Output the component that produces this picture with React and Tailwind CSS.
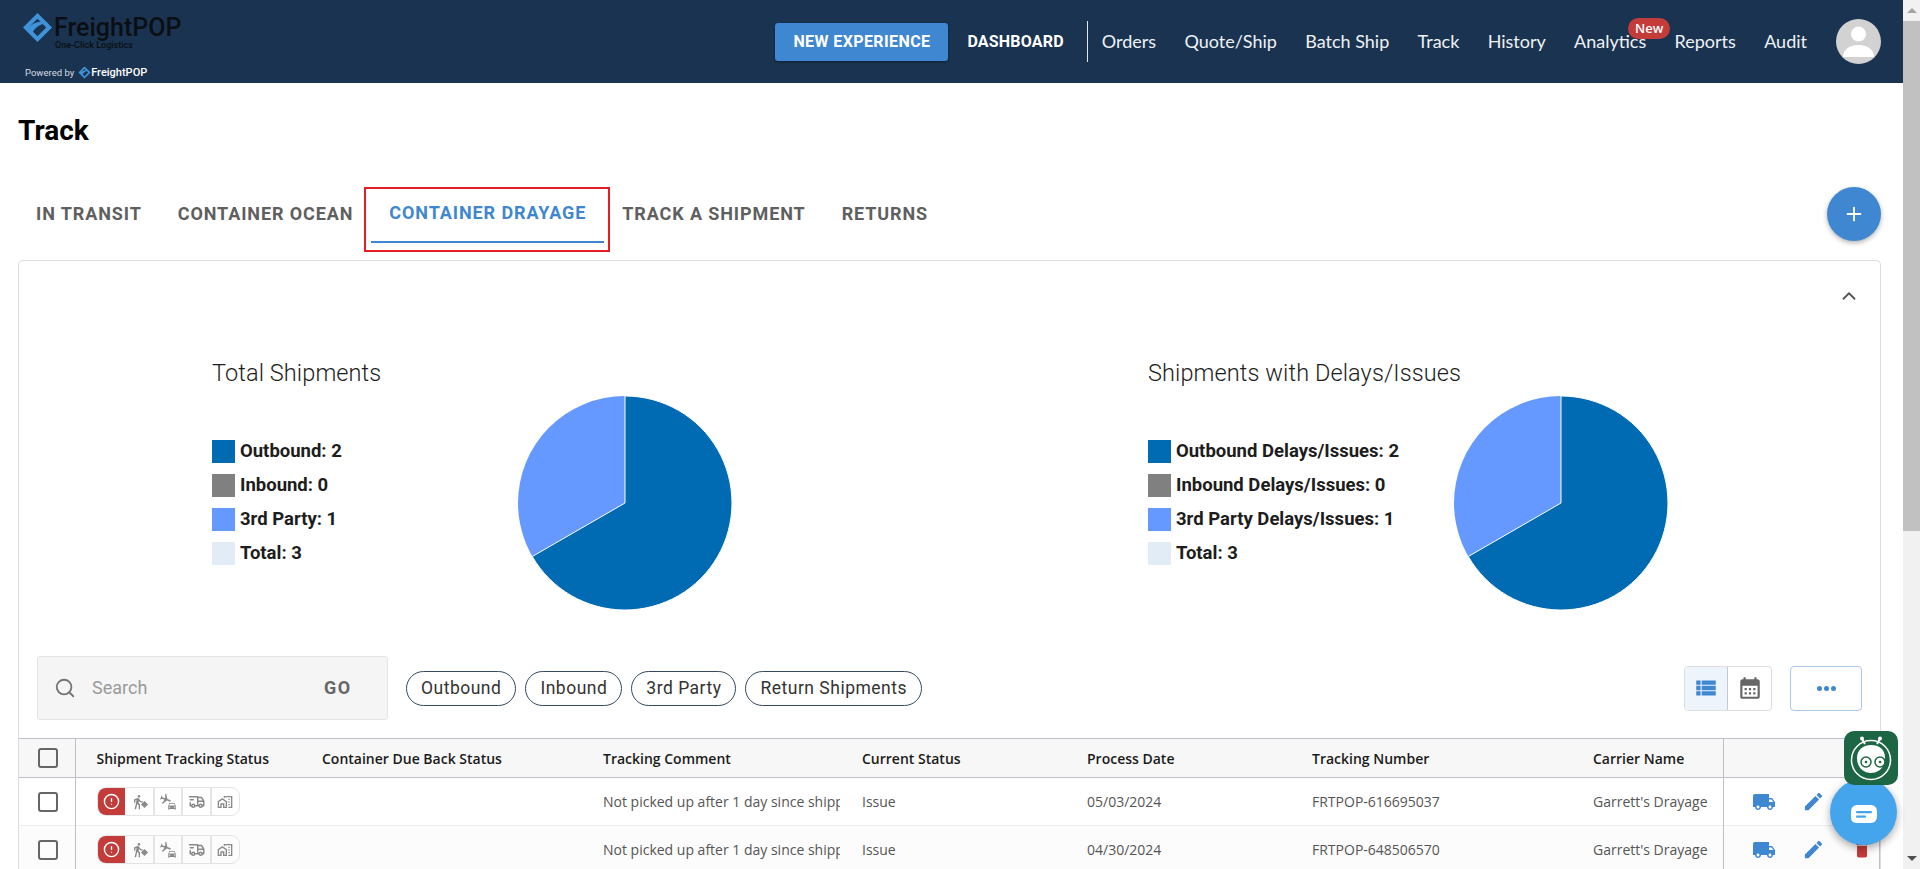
import { ChevronUp, Plus, Search, CircleAlert } from "lucide-react";
import { MdLocalShipping, MdEdit, MdDelete, MdViewList, MdCalendarMonth, MdFlight, MdDirectionsCar, MdDirectionsWalk, MdOutlineHomeWork } from "react-icons/md";
import { TbTruckDelivery } from "react-icons/tb";

const heading = "font-['Roboto',sans-serif]";

const navItems = ["Orders", "Quote/Ship", "Batch Ship", "Track", "History", "Analytics", "Reports", "Audit"];
const tabs = ["IN TRANSIT", "CONTAINER OCEAN", "CONTAINER DRAYAGE", "TRACK A SHIPMENT", "RETURNS"];
const filters = ["Outbound", "Inbound", "3rd Party", "Return Shipments"];

const rows = [
  { date: "05/03/2024", tracking: "FRTPOP-616695037", bg: "bg-white" },
  { date: "04/30/2024", tracking: "FRTPOP-648506570", bg: "bg-[#fcfcfc]" },
];

function LogoMark({ className }) {
  return (
    <svg viewBox="0 0 32 32" className={className}>
      <path d="M16 1 L31 16 L16 31 L1 16 Z M16 7 L7 16 L16 25 L25 16 Z" fill="#3f93d8" fillRule="evenodd" />
      <path d="M6 17 C12 10 20 9 27 11 C20 12 14 15 11 21 Z" fill="#3f93d8" />
    </svg>
  );
}

function Avatar() {
  return (
    <svg viewBox="0 0 45 45" className="w-[45px] h-[45px]">
      <defs>
        <clipPath id="avatar-clip">
          <circle cx="22.5" cy="22.5" r="22.5" />
        </clipPath>
      </defs>
      <circle cx="22.5" cy="22.5" r="22.5" fill="#d2d2d2" />
      <g clipPath="url(#avatar-clip)">
        <circle cx="22.5" cy="15" r="7.5" fill="#fff" />
        <path d="M7 38 C7 30 14 26 22.5 26 C31 26 38 30 38 38 Z" fill="#fff" />
      </g>
    </svg>
  );
}

function Header() {
  return (
    <header className="h-[83px] shrink-0 bg-[#1a3350] flex items-start justify-between pr-[22px]">
      <div className="pl-[22px] pt-[12px] w-[300px]">
        <div className="flex items-center">
          <LogoMark className="w-[31px] h-[31px]" />
          <span className="font-['Roboto',sans-serif] text-[25px] leading-[26px] text-[#0b0f14] font-medium ml-[1px]">FreightPOP</span>
        </div>
        <div className="font-['Roboto',sans-serif] text-[9px] leading-[10px] text-[#0b0f14] ml-[33px] mt-[-3px] font-medium">One-Click Logistics</div>
        <div className="flex items-center mt-[16px] ml-[3px] text-[9.5px] leading-[12px] text-[#d8dde3] font-['Roboto',sans-serif]">
          Powered by
          <LogoMark className="w-[13px] h-[13px] ml-[4px]" />
          <span className="text-white text-[11px] font-medium">FreightPOP</span>
        </div>
      </div>
      <nav className="flex items-center h-full">
        <button className={`${heading} h-[38px] w-[173px] rounded-[3px] bg-[#3f87d0] text-white text-[16px] font-bold tracking-[0.4px] shadow-[0_1px_3px_rgba(0,0,0,0.4)]`}>NEW EXPERIENCE</button>
        <span className={`${heading} text-white text-[16px] font-bold ml-[19px] tracking-[0.2px]`}>DASHBOARD</span>
        <div className="w-px h-[41px] bg-[#e6e6e6] ml-[23px] mr-[14px]" />
        <div className="flex items-center gap-[28.3px] pr-[29px]">
          {navItems.map((item) => (
            <div key={item} className="relative font-['Lato',sans-serif] text-[18px] text-[#eef2f6]">
              {item}
              {item === "Analytics" && (
                <span className="absolute left-[54px] top-[-10px] h-[21px] w-[42px] rounded-full bg-[#c43c3a] text-white text-[13px] font-semibold leading-[21px] text-center font-['Open_Sans',sans-serif]">New</span>
              )}
            </div>
          ))}
        </div>
        <Avatar />
      </nav>
    </header>
  );
}

function Tabs() {
  return (
    <div className="flex items-start h-[65px] mt-[40px] mx-[18px] justify-between">
      <div className="flex h-full">
        {tabs.map((tab) => {
          const active = tab === "CONTAINER DRAYAGE";
          return (
            <div key={tab} className="relative h-full">
              <div className={`${heading} h-[56px] px-[18px] flex items-center pb-[3px] text-[18px] font-bold tracking-[0.9px] whitespace-nowrap ${active ? "text-[#3f87d0] border-b-2 border-[#3f87d0]" : "text-[#5f5f5f]"}`}>
                {tab}
              </div>
              {active && <div className="absolute -left-[7px] -right-[6px] top-0 bottom-0 border-2 border-[#e81c24]" />}
            </div>
          );
        })}
      </div>
      <button className="w-[54px] h-[54px] mr-[4px] rounded-full bg-[#3f87d0] text-white flex items-center justify-center shadow-[0_2px_5px_rgba(0,0,0,0.3)]">
        <Plus size={22} strokeWidth={2} />
      </button>
    </div>
  );
}

function Pie() {
  return (
    <svg viewBox="0 0 214 214" className="w-[214px] h-[214px] mt-[41px] shrink-0">
      <circle cx="107" cy="107" r="107" fill="#6699ff" />
      <path d="M107 107 L107 0 A107 107 0 1 1 14.3 160.5 Z" fill="#006ab3" stroke="#fff" strokeWidth="1" />
    </svg>
  );
}

function ChartBlock({ title, legend }) {
  const swatches = ["bg-[#006ab3]", "bg-[#808080]", "bg-[#6699ff]", "bg-[#e2ecf7]"];
  return (
    <div className="flex w-[936px] shrink-0">
      <div className="w-[306px]">
        <div className={`${heading} h-[36px] leading-[36px] text-[23.5px] font-light tracking-[0.1px] text-[#1d1d1d] whitespace-nowrap`}>{title}</div>
        <div className="mt-[49px] flex flex-col gap-[11px]">
          {legend.map((label, i) => (
            <div key={label} className="flex items-center h-[23px]">
              <span className={`w-[23px] h-[23px] shrink-0 ${swatches[i]}`} />
              <span className={`${heading} ml-[5px] mt-[1px] text-[18.5px] font-bold text-[#1d1d1d] whitespace-nowrap`}>{label}</span>
            </div>
          ))}
        </div>
      </div>
      <Pie />
    </div>
  );
}

function Toolbar() {
  return (
    <div className="flex items-center justify-between mt-[46px] px-[18px] h-[64px]">
      <div className="flex items-center">
        <div className="flex items-center w-[351px] h-[64px] rounded-[3px] border border-[#e4e4e4] bg-[#f5f5f5] pl-[16px] pb-[1px]">
          <Search size={22} className="text-[#757575]" />
          <span className={`${heading} ml-[16px] text-[18px] text-[#9a9a9a] w-[232px]`}>Search</span>
          <span className={`${heading} text-[18px] font-bold text-[#666] tracking-[1.5px]`}>GO</span>
        </div>
        <div className="flex items-center gap-[9px] ml-[18px]">
          {filters.map((f) => (
            <span key={f} className={`${heading} h-[35px] px-[14px] flex items-center rounded-full border border-[#34495e] text-[17.5px] tracking-[0.5px] text-[#333] whitespace-nowrap`}>{f}</span>
          ))}
        </div>
      </div>
      <div className="flex items-center">
        <div className="flex h-[45px] w-[88px] rounded-[4px] border border-[#dedede]">
          <div className="w-[43px] bg-[#eef4fb] border-r border-[#c9c9c9] rounded-l-[4px] flex items-center justify-center text-[#3f87d0]">
            <MdViewList size={26} />
          </div>
          <div className="flex-1 flex items-center justify-center text-[#666]">
            <MdCalendarMonth size={26} />
          </div>
        </div>
        <button className="ml-[18px] h-[45px] w-[72px] rounded-[4px] border border-[#a9c8ea] flex items-center justify-center gap-[2px]">
          <i className="w-[5px] h-[5px] rounded-full bg-[#3f87d0]" />
          <i className="w-[5px] h-[5px] rounded-full bg-[#3f87d0]" />
          <i className="w-[5px] h-[5px] rounded-full bg-[#3f87d0]" />
        </button>
      </div>
    </div>
  );
}

function Checkbox() {
  return <span className="block w-[20px] h-[20px] ml-[19px] rounded-[3px] border-2 border-[#666]" />;
}

function StatusPill() {
  const cell = "w-[29px] flex items-center justify-center border-l-2 border-[#e4e4e4] text-[#8a8a8a]";
  return (
    <div className="flex h-[29px] w-[143px] rounded-[9px] border border-[#e4e4e4] overflow-hidden">
      <div className="w-[27px] shrink-0 bg-[#c43c3a] flex items-center justify-center text-white">
        <CircleAlert size={17} strokeWidth={2} />
      </div>
      <div className="w-[29px] flex items-center justify-center text-[#8a8a8a]">
        <MdDirectionsWalk size={16} />
        <span className="w-[5px] h-[5px] bg-[#8a8a8a] -ml-[4px] mt-[5px] rotate-45" />
      </div>
      <div className={cell}>
        <span className="relative block w-[18px] h-[18px]">
          <MdFlight size={13} className="absolute left-0 top-0 rotate-[110deg]" />
          <MdDirectionsCar size={10} className="absolute right-0 bottom-0" />
        </span>
      </div>
      <div className={cell}>
        <TbTruckDelivery size={18} />
      </div>
      <div className={cell}>
        <MdOutlineHomeWork size={16} />
      </div>
    </div>
  );
}

function TrackingTable() {
  const th = "text-left font-semibold pl-[22px] whitespace-nowrap";
  const td = "pl-[22px] whitespace-nowrap overflow-hidden";
  return (
    <table className="table-fixed w-[1860px] ml-0 mt-[18px] border-collapse font-['Open_Sans',sans-serif] text-[14px] text-[#555]">
      <colgroup>
        <col className="w-[56px]" />
        <col className="w-[225px]" />
        <col className="w-[281px]" />
        <col className="w-[259px]" />
        <col className="w-[225px]" />
        <col className="w-[225px]" />
        <col className="w-[281px]" />
        <col className="w-[152px]" />
        <col className="w-[156px]" />
      </colgroup>
      <thead>
        <tr className="h-[39px] bg-[#f7f7f7] text-[#1b1b1b] border-y border-[#bfbfca]">
          <th className="border-r border-[#bfbfca]"><Checkbox /></th>
          <th className="text-left font-semibold pl-[21px] whitespace-nowrap">Shipment Tracking Status</th>
          <th className={th}>Container Due Back Status</th>
          <th className={th}>Tracking Comment</th>
          <th className={th}>Current Status</th>
          <th className={th}>Process Date</th>
          <th className={th}>Tracking Number</th>
          <th className={th}>Carrier Name</th>
          <th className="border-x border-[#bfbfca]" />
        </tr>
      </thead>
      <tbody>
        {rows.map((row) => (
          <tr key={row.tracking} className={`h-[48px] border-b border-[#eeeeee] ${row.bg}`}>
            <td className="border-r border-[#bfbfca]"><Checkbox /></td>
            <td className="pl-[21px] overflow-hidden"><StatusPill /></td>
            <td className={td} />
            <td className={td}>Not picked up after 1 day since shipped</td>
            <td className={td}>Issue</td>
            <td className={td}>{row.date}</td>
            <td className={td}>{row.tracking}</td>
            <td className={td}>Garrett's Drayage</td>
            <td className="border-x border-[#bfbfca]">
              <div className="flex items-center pl-[28px] text-[#3f87d0]">
                <MdLocalShipping size={24} />
                <MdEdit size={23} className="ml-[26px]" />
                <MdDelete size={20} className="ml-[27px] text-[#c43c3a]" />
              </div>
            </td>
          </tr>
        ))}
      </tbody>
    </table>
  );
}

function Scrollbar() {
  return (
    <div className="w-[17px] shrink-0 bg-[#f1f1f1] flex flex-col items-center">
      <div className="h-[21px] w-full flex items-center justify-center">
        <span className="border-x-[5px] border-x-transparent border-b-[5px] border-b-[#a3a3a3]" />
      </div>
      <div className="w-full h-[510px] bg-[#c1c1c1]" />
      <div className="flex-1" />
      <div className="h-[21px] w-full flex items-center justify-center">
        <span className="border-x-[5px] border-x-transparent border-t-[5px] border-t-[#505050]" />
      </div>
    </div>
  );
}

function BotBadge() {
  return (
    <div className="absolute left-[1844px] top-[731px] w-[54px] h-[54px] rounded-[10px] bg-[#1d6644] z-20">
      <svg viewBox="0 0 54 54" className="w-full h-full" fill="none" stroke="#fff" strokeWidth="1.5">
        <circle cx="27" cy="29" r="19.5" />
        <path d="M21 13 L18 8 M33 13 L36 8" strokeWidth="2" />
        <circle cx="18" cy="7.5" r="2" fill="#fff" stroke="none" />
        <circle cx="36" cy="7.5" r="2" fill="#fff" stroke="none" />
        <path d="M13 27 C13 18 20 14 27 14 C35 14 41 18 41 27 C41 38 33 42 27 42 C19 42 13 36 13 27 Z" fill="#fff" stroke="none" />
        <circle cx="22" cy="31" r="5" fill="#fff" stroke="#1d6644" />
        <circle cx="36" cy="31" r="5" fill="#fff" stroke="#1d6644" />
        <circle cx="22" cy="31" r="1.3" fill="#1d6644" stroke="none" />
        <circle cx="36" cy="31" r="1.3" fill="#1d6644" stroke="none" />
      </svg>
    </div>
  );
}

function ChatButton() {
  return (
    <div className="absolute left-[1830px] top-[779px] w-[67px] h-[66px] rounded-full bg-[#45a5ec] shadow-[0_3px_8px_rgba(0,0,0,0.35)] flex items-center justify-center z-10">
      <svg viewBox="0 0 26 20" className="w-[26px] h-[20px] mt-[5px]">
        <path d="M6 0 H20 A6 6 0 0 1 26 6 V12 A6 6 0 0 1 20 18 H5 A5 5 0 0 1 0 13 V6 A6 6 0 0 1 6 0 Z" fill="#fff" />
        <rect x="5" y="6" width="16" height="2.2" rx="1" fill="#45a5ec" />
        <rect x="5" y="10.5" width="10" height="2.2" rx="1" fill="#45a5ec" />
      </svg>
    </div>
  );
}

export default function App() {
  return (
    <div className="relative flex h-screen w-full overflow-hidden bg-white">
      <div className="flex-1 min-w-0 flex flex-col overflow-hidden">
        <Header />
        <main className="flex-1 min-h-0 overflow-hidden">
          <h1 className="font-['Roboto',sans-serif] text-[28px] leading-[32px] font-bold text-black pl-[18px] pt-[32px] box-content">Track</h1>
          <Tabs />
          <section className="mt-[8px] mx-[18px] w-[1863px] rounded-t-[5px] border border-[#dddddd] border-b-0 h-[700px]">
            <div className="h-[94px] flex justify-end pt-[24px] pr-[20px] text-[#555]">
              <ChevronUp size={22} />
            </div>
            <div className="flex pl-[193px]">
              <ChartBlock title="Total Shipments" legend={["Outbound: 2", "Inbound: 0", "3rd Party: 1", "Total: 3"]} />
              <ChartBlock title="Shipments with Delays/Issues" legend={["Outbound Delays/Issues: 2", "Inbound Delays/Issues: 0", "3rd Party Delays/Issues: 1", "Total: 3"]} />
            </div>
            <Toolbar />
            <TrackingTable />
          </section>
        </main>
      </div>
      <Scrollbar />
      <ChatButton />
      <BotBadge />
    </div>
  );
}
